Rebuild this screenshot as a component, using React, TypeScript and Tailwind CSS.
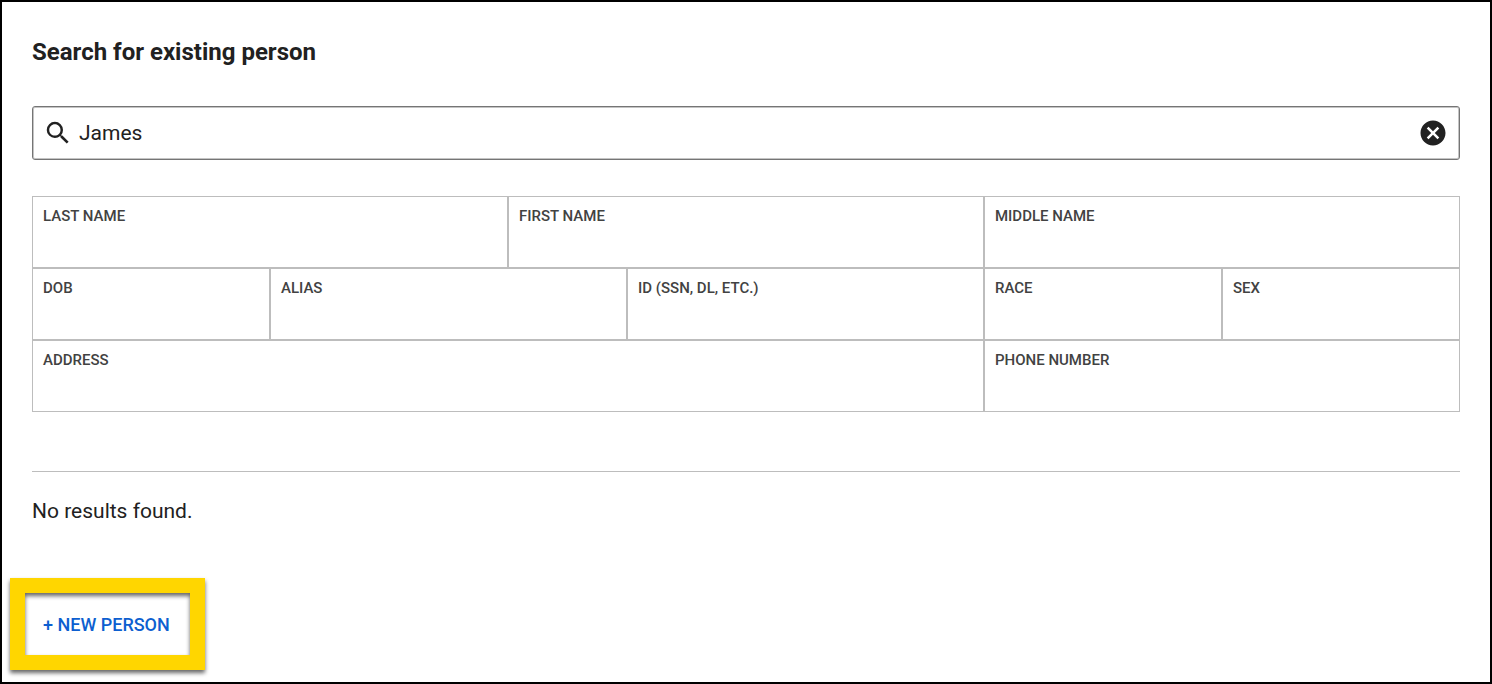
import { useState } from "react";

type Field = { id: string; label: string; span: string };

const fields: Field[] = [
  { id: "last-name", label: "LAST NAME", span: "col-span-4" },
  { id: "first-name", label: "FIRST NAME", span: "col-span-4" },
  { id: "middle-name", label: "MIDDLE NAME", span: "col-span-4" },
  { id: "dob", label: "DOB", span: "col-span-2" },
  { id: "alias", label: "ALIAS", span: "col-span-3" },
  { id: "id-number", label: "ID (SSN, DL, ETC.)", span: "col-span-3" },
  { id: "race", label: "RACE", span: "col-span-2" },
  { id: "sex", label: "SEX", span: "col-span-2" },
  { id: "address", label: "ADDRESS", span: "col-span-8" },
  { id: "phone", label: "PHONE NUMBER", span: "col-span-4" },
];

function SearchIcon() {
  return (
    <svg viewBox="0 0 24 24" className="size-[30px] shrink-0" fill="currentColor" aria-hidden="true">
      <path d="M15.5 14h-.79l-.28-.27A6.471 6.471 0 0 0 16 9.5 6.5 6.5 0 1 0 9.5 16c1.61 0 3.09-.59 4.23-1.57l.27.28v.79l5 4.99L20.49 19l-4.99-5zm-6 0C7.01 14 5 11.99 5 9.5S7.01 5 9.5 5 14 7.01 14 9.5 11.99 14 9.5 14z" />
    </svg>
  );
}

function ClearIcon() {
  return (
    <svg viewBox="0 0 24 24" className="size-[30px]" fill="currentColor" aria-hidden="true">
      <path d="M12 2C6.47 2 2 6.47 2 12s4.47 10 10 10 10-4.47 10-10S17.53 2 12 2zm5 13.59L15.59 17 12 13.41 8.41 17 7 15.59 10.59 12 7 8.41 8.41 7 12 10.59 15.59 7 17 8.41 13.41 12 17 15.59z" />
    </svg>
  );
}

function FieldCell({ id, label, span }: Field) {
  return (
    <div className={`flex h-18 flex-col border border-[#bdbdbd] px-2.5 pt-2 ${span}`}>
      <label htmlFor={id} className="text-[15px] leading-[22px] font-medium text-[#424242]">
        {label}
      </label>
      <input id={id} type="text" className="w-full min-w-0 flex-1 bg-transparent text-xl outline-none" />
    </div>
  );
}

export default function App() {
  const [query, setQuery] = useState("James");

  return (
    <main className="min-h-screen border-2 border-black bg-white px-[30px] pt-[34px] font-['Roboto',sans-serif] text-[#212121]">
      <h1 className="text-2xl leading-8 font-bold">Search for existing person</h1>

      <div className="mt-[38px] flex h-[54px] items-center rounded-[3px] border border-[#757575] pr-[11px] pl-2.5 shadow-[inset_0_0_0_1px_#c4c4c4]">
        <SearchIcon />
        <input
          type="text"
          aria-label="Search for existing person"
          value={query}
          onChange={(e) => setQuery(e.target.value)}
          className="ml-1.5 min-w-0 flex-1 bg-transparent text-[21px] leading-8 outline-none"
        />
        <button type="button" aria-label="Clear search" onClick={() => setQuery("")}>
          <ClearIcon />
        </button>
      </div>

      <div className="mt-9 grid grid-cols-12">
        {fields.map((field) => (
          <FieldCell key={field.id} {...field} />
        ))}
      </div>

      <hr className="mt-[59px] border-t border-[#bdbdbd]" />
      <p className="mt-[23px] text-[21px] leading-8">No results found.</p>

      <div className="relative mt-[74px] inline-flex">
        <button type="button" className="h-12 px-[11px] text-lg font-medium text-[#0d5fd0]">
          + NEW PERSON
        </button>
        <span
          aria-hidden="true"
          className="pointer-events-none absolute -top-[23px] -right-6 -bottom-[21px] -left-[22px] border-[15px] border-[#ffd600] drop-shadow-[0_3px_2px_rgba(0,0,0,0.6)]"
        />
      </div>
    </main>
  );
}
